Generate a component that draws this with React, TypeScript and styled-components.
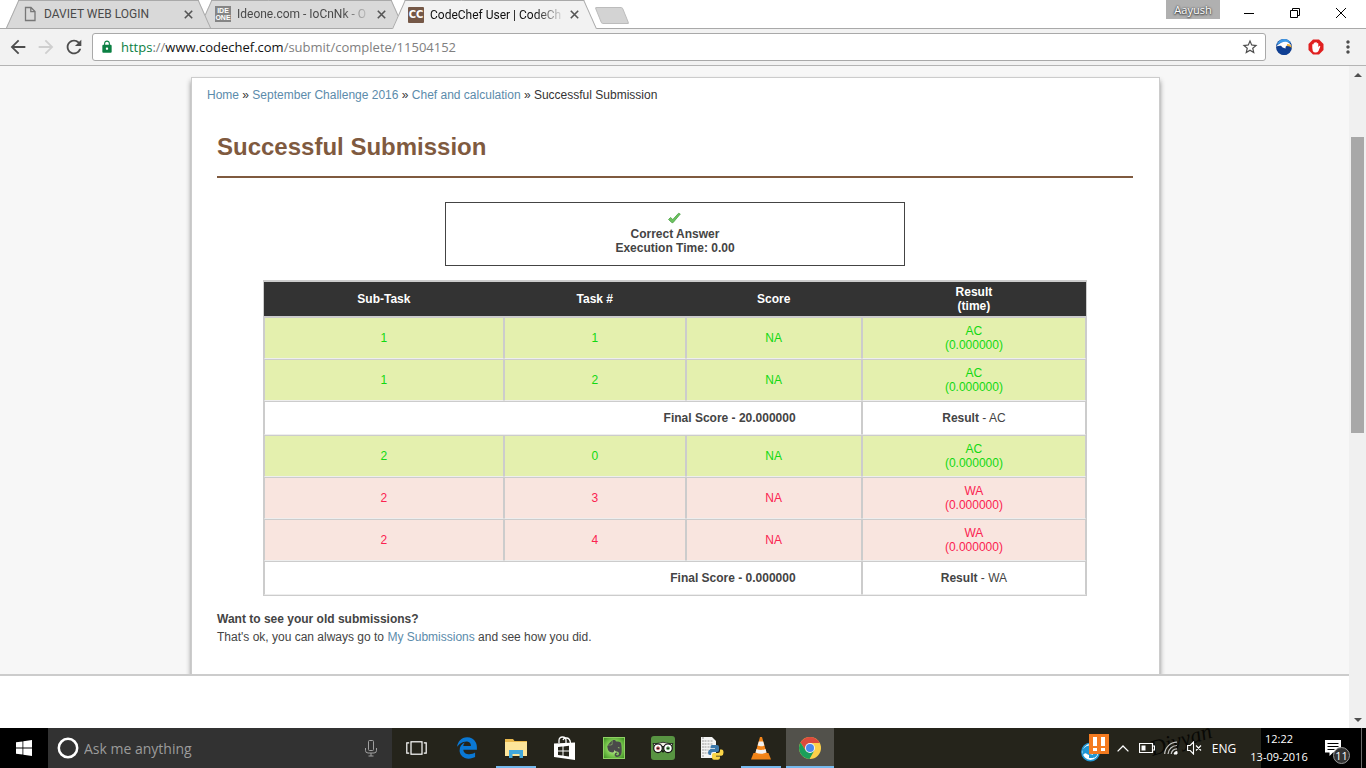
import React from "react";
import styled, { createGlobalStyle, css } from "styled-components";
import {
  MdArrowBack,
  MdArrowForward,
  MdLock,
  MdMoreVert,
  MdRefresh,
  MdStarBorder,
} from "react-icons/md";
import { FaEdgeLegacy } from "react-icons/fa";
import { SiEvernote } from "react-icons/si";

const GlobalStyle = createGlobalStyle`
  *, *::before, *::after { box-sizing: border-box; }
  body { margin: 0; background: #fff; }
  button { padding: 0; border: 0; background: none; color: inherit; font: inherit; }
`;

const uiFont = '"Open Sans", "Noto Sans", sans-serif';
const tabFont = 'Roboto, "Open Sans", sans-serif';
const siteFont = '"Liberation Sans", Arial, sans-serif';

/* ---------- window ---------- */

const Window = styled.div`
  display: flex;
  flex-direction: column;
  min-height: 100vh;
  font-family: ${uiFont};
`;

const TabStrip = styled.header`
  position: relative;
  display: flex;
  align-items: flex-start;
  height: 29px;
  padding: 0 2px 0 6px;
  background: #fff;
  box-shadow: inset 0 -1px 0 #a9a9a9;
`;

const TabList = styled.div`
  display: flex;
`;

const Tab = styled.div<{ $active?: boolean; $level: number }>`
  position: relative;
  z-index: ${(p) => p.$level};
  display: flex;
  align-items: center;
  width: 205px;
  height: ${(p) => (p.$active ? 29 : 28)}px;
  margin-right: -12px;
  padding: 0 15px 0 16px;
  color: ${(p) => (p.$active ? "#111" : "#4a4a4a")};
  font-family: ${tabFont};
  font-size: 12px;

  &::before,
  &::after {
    content: "";
    position: absolute;
    z-index: -1;
    top: 0;
    bottom: 0;
    width: 60%;
    background: ${(p) => (p.$active ? "#f2f2f2" : "#d9d9d9")};
    border-top: 1px solid #a9a9a9;
  }
  &::before {
    left: 0;
    border-left: 1px solid #a9a9a9;
    transform: skewX(-24deg);
    transform-origin: bottom left;
  }
  &::after {
    right: 0;
    border-right: 1px solid #a9a9a9;
    transform: skewX(24deg);
    transform-origin: bottom right;
  }
`;

const TabTitle = styled.button<{ $fade?: boolean }>`
  flex: 1;
  min-width: 0;
  margin: 0 2px 0 6px;
  overflow: hidden;
  white-space: nowrap;
  text-align: left;
  line-height: 18px;
  ${(p) => p.$fade && "mask-image: linear-gradient(to right, #000 78%, transparent);"}
`;

const TabClose = styled.button`
  display: flex;
  padding: 3px;
  color: #555;
`;

const Favicon = styled.span<{ $bg?: string }>`
  display: flex;
  flex-direction: column;
  align-items: center;
  justify-content: center;
  width: 16px;
  height: 16px;
  background: ${(p) => p.$bg || "transparent"};
  color: #fff;
  font: bold 7px/7px "Liberation Sans", sans-serif;
`;

const FaviconCC = styled(Favicon)`
  border-radius: 1px;
  font: bold 10px/16px "DejaVu Sans", sans-serif;
`;

const NewTab = styled.button`
  width: 28px;
  height: 17px;
  margin: 7px 0 0 13px;
  background: #d3d3d3;
  border: 1px solid #bcbcbc;
  border-radius: 2px;
  transform: skewX(22deg);
`;

const WindowControls = styled.div`
  display: flex;
  align-items: flex-start;
  margin-left: auto;
  color: #000;
`;

const Profile = styled.button`
  width: 54px;
  height: 19px;
  background: #b0b0b0;
  color: #fff;
  font-size: 11px;
  line-height: 18px;
  text-shadow: 0 0 2px #333, 0 1px 2px #333;
`;

const WindowButton = styled.button`
  display: flex;
  align-items: center;
  justify-content: center;
  width: 46px;
  height: 26px;

  ${Profile} + & {
    margin-left: 6px;
  }
`;

/* ---------- toolbar ---------- */

const Toolbar = styled.nav`
  display: flex;
  align-items: center;
  height: 37px;
  padding: 0 2px 0 4px;
  background: #f2f2f2;
  border-bottom: 1px solid #b4b4b4;
`;

const ToolButton = styled.button<{ $off?: boolean; $w?: number }>`
  display: flex;
  align-items: center;
  justify-content: center;
  width: ${(p) => p.$w || 28}px;
  height: 28px;
  color: ${(p) => (p.$off ? "#cfcfcf" : "#4d4d4d")};
`;

const AddressBar = styled.div`
  display: flex;
  flex: 1;
  align-items: center;
  height: 28px;
  margin: 0 2px 0 4px;
  padding: 0 1px 0 7px;
  background: #fff;
  border: 1px solid #a9a9a9;
  border-radius: 3px;
  color: #0b8043;
`;

const Address = styled.div`
  flex: 1;
  margin-left: 7px;
  color: #808080;
  font-size: 13px;
  line-height: 20px;
  white-space: nowrap;
  outline: none;
`;

const Secure = styled.span`
  color: #0b8043;
`;
const Host = styled.span`
  color: #111;
`;

/* ---------- page ---------- */

const Viewport = styled.div`
  display: flex;
  flex: 1;
`;

const Site = styled.div`
  display: flex;
  flex: 1;
  flex-direction: column;
  min-width: 0;
  background: #fff;
  color: #444;
  font: 12px/14px ${siteFont};
`;

const Backdrop = styled.div`
  padding: 11px 0 0 2px;
  overflow: hidden;
  background: #f7f7f7;
  border-bottom: 2px solid #ccc;
`;

const Card = styled.main`
  max-width: 969px;
  margin: 0 auto;
  padding: 10px 26px 28px 25px;
  background: #fff;
  border: 1px solid #ccc;
  border-bottom: 0;
  box-shadow: 0 4px 5px #888;
`;

const Link = styled.a`
  color: #5b8bab;
  text-decoration: none;
`;

const Breadcrumbs = styled.nav`
  margin-left: -10px;
  color: #333;
`;

const Title = styled.h1`
  margin: 30px 0 24px;
  padding-bottom: 14px;
  border-bottom: 2px solid #7f5a3f;
  color: #7f5a3f;
  font-size: 24px;
  line-height: 30px;
`;

const Verdict = styled.section`
  max-width: 460px;
  margin: 0 auto 14px;
  padding: 7px 0 10px;
  border: 1px solid #444;
  font-weight: bold;
  text-align: center;

  svg {
    display: block;
    margin: 0 auto 1px;
  }
  p {
    margin: 0;
  }
`;

const Results = styled.table`
  width: 90%;
  margin: 0 auto;
  border: 1px solid #ccc;
  border-spacing: 0;
  table-layout: fixed;
  text-align: center;
`;

const HeadCell = styled.th<{ $width: string }>`
  width: ${(p) => p.$width};
  padding: 3px 0;
  background: #333;
  border: 1px solid #ccc;
  border-width: 1px 0;
  color: #fff;
`;

const tones = {
  ok: css`
    background: #e4f0ae;
    color: #12d912;
  `,
  bad: css`
    background: #f9e5df;
    color: #fb2350;
  `,
};

const Cell = styled.td<{ $tone: "ok" | "bad" }>`
  padding: 6px 0;
  border: 1px solid #ccc;
  border-bottom-color: #eee;
  ${(p) => tones[p.$tone]}
`;

const SummaryCell = styled.td<{ $end?: boolean }>`
  padding: 9px 0;
  border: 1px solid #ccc;
  border-bottom-color: #eee;
  ${(p) =>
    p.$end &&
    css`
      padding-right: 65px;
      text-align: right;
    `}
`;

const Help = styled.p`
  margin: 14px 0 0;
  line-height: 18px;
`;

/* ---------- scrollbar ---------- */

const Scrollbar = styled.div`
  display: flex;
  flex-direction: column;
  width: 17px;
  background: #f0f0f0;
`;

const ScrollArrow = styled.button`
  display: flex;
  align-items: center;
  justify-content: center;
  height: 17px;
`;

const Track = styled.div`
  display: flex;
  flex: 1;
  flex-direction: column;
  align-items: center;

  &::before {
    content: "";
    flex: 54;
  }
  &::after {
    content: "";
    flex: 278;
  }
`;

const Thumb = styled.div`
  flex: 296;
  width: 13px;
  background: #a8a8a8;
`;

/* ---------- taskbar ---------- */

const Taskbar = styled.footer`
  display: flex;
  height: 40px;
  background: #25241b;
  color: #fff;
`;

const StartButton = styled.button`
  display: flex;
  align-items: center;
  justify-content: center;
  width: 48px;
  background: #000;
`;

const SearchBox = styled.label`
  display: flex;
  align-items: center;
  width: 344px;
  padding: 0 15px 0 8px;
  background: #323232;
`;

const SearchInput = styled.input`
  flex: 1;
  min-width: 0;
  margin-left: 4px;
  padding: 1px 0 0;
  border: 0;
  outline: 0;
  background: none;
  color: #fff;
  font: 14px/20px ${uiFont};

  &::placeholder {
    color: #9b9b9b;
  }
`;

const Apps = styled.div`
  display: flex;
  gap: 1px;
  margin-left: 3px;
`;

const AppButton = styled.button<{ $state?: "open" | "active" }>`
  display: flex;
  align-items: center;
  justify-content: center;
  width: 48px;
  ${(p) =>
    p.$state === "open" &&
    css`
      background: linear-gradient(#76b9ed, #76b9ed) center bottom / 40px 2px no-repeat;
    `}
  ${(p) =>
    p.$state === "active" &&
    css`
      background: linear-gradient(#76b9ed, #76b9ed) center bottom / 100% 2px no-repeat #52514b;
    `}
`;

const Tray = styled.div`
  position: relative;
  display: flex;
  align-items: center;
  margin-left: auto;
`;

const TrayButton = styled.button<{ $w: number }>`
  position: relative;
  display: flex;
  align-items: center;
  justify-content: center;
  width: ${(p) => p.$w}px;
  height: 40px;
  font-size: 12px;
`;

const Signature = styled.span`
  position: absolute;
  left: 70px;
  top: 1px;
  color: #080805;
  font: italic 22px/22px "Liberation Serif", serif;
  transform: rotate(-17deg);
`;

const Dark = styled.div`
  display: flex;
  height: 40px;
  margin-left: 6px;
  background: linear-gradient(to right, transparent 12px, #000 12px);
`;

const Clock = styled.time`
  width: 60px;
  padding-top: 2px;
  font-size: 11px;
  line-height: 18px;
  text-align: center;
  white-space: nowrap;
`;

const Notifications = styled(TrayButton)`
  margin-right: 4px;
`;

const Badge = styled.span`
  position: absolute;
  left: 24px;
  top: 19px;
  width: 17px;
  height: 17px;
  border: 1px solid #999;
  border-radius: 50%;
  background: #333;
  font-size: 11px;
  line-height: 15px;
`;

const ShowDesktop = styled.button`
  width: 5px;
  height: 40px;
  border-left: 1px solid #6a6a6a;
`;

/* ---------- drawings ---------- */

const CloseMark = () => (
  <svg width="9" height="9" viewBox="0 0 9 9" stroke="currentColor" strokeWidth="1.6">
    <path d="M.8.8l7.4 7.4M8.2.8L.8 8.2" />
  </svg>
);

const PageIcon = () => (
  <svg width="16" height="16" viewBox="0 0 16 16" fill="none" stroke="#777" strokeWidth="1.3">
    <path d="M3.5 1.5h5.5l4 4v9h-9.500z M8.800 1.500v4.200h4.200" />
  </svg>
);

const Tick = () => (
  <svg width="16" height="16" viewBox="0 0 16 16">
    <path d="M1.500 9.500l2-2 2.300 2L11.500 3.300l1.800.7L6 12.700 4.800 12.600z" fill="#6cc35f" stroke="#4c9f48" strokeWidth=".8" />
  </svg>
);

const BirdIcon = () => (
  <svg width="16" height="16" viewBox="0 0 16 16">
    <circle cx="8" cy="8" r="8" fill="#123f8e" />
    <path d="M.5 6Q3 0 8 0t7 4Q7 1 .5 6z" fill="#3f9be8" />
    <path d="M0 7.500Q5 2.500 10 2.800 14 3.500 15.500 7 13 5.800 11 6.500 9 7.500 9.500 9.500 6 9 5 6.800 3 6.500 0 7.500z" fill="#fff" />
    <path d="M11 5q4-.5 5 4-2-2-5-2z" fill="#f6b63c" />
    <path d="M1 9.500q5-2 8 1t6-.5q-2 6-7 6t-7-6.500z" fill="#0f3f94" />
  </svg>
);

const HandIcon = () => (
  <svg width="16" height="16" viewBox="0 0 16 16">
    <path d="M5 .5h6L15.500 5v6L11 15.500H5L.5 11V5z" fill="#e02020" />
    <path d="M4.300 9V5.500q.7-1 1.400 0V4q.8-1 1.500 0v-.5q.8-1.200 1.600 0V4.500q.8-1 1.500 0V8l1.300-1.300q.9.100.6 1L10.500 12q-1 1.500-3 1.500T4.800 12z" fill="#fff" />
  </svg>
);

const ArrowGlyph = ({ down }: { down?: boolean }) => (
  <svg width="8" height="4" viewBox="0 0 8 4" fill="#505050">
    <path d={down ? "M0 0h8L4 4z" : "M0 4h8L4 0z"} />
  </svg>
);

const WindowsLogo = () => (
  <svg width="16" height="16" viewBox="0 0 16 16" fill="#fff">
    <path d="M0 2.300L6.500 1.400v6.100H0zM7.300 1.200L16 0v7.500H7.300zM0 8.400h6.500v6.200L0 13.700zM7.300 8.400H16V16l-8.700-1.200z" />
  </svg>
);

const MicIcon = () => (
  <svg width="12" height="17" viewBox="0 0 12 17" fill="none" stroke="#a0a0a0">
    <rect x="3.500" y=".5" width="5" height="10" rx="1" />
    <path d="M.5 8v2.500q0 2.500 2.500 2.500h6q2.500 0 2.500-2.500V8M6 13v3M3.500 16h5" />
  </svg>
);

const TaskViewIcon = () => (
  <svg width="21" height="14" viewBox="0 0 21 14" fill="none" stroke="#fff" strokeWidth="1.200">
    <rect x="5" y=".8" width="11" height="12.400" />
    <path d="M3.200 1.800H.8v10.400h2.400M17.800 1.800h2.400v10.400h-2.400" />
  </svg>
);

const FolderIcon = () => (
  <svg width="22" height="20" viewBox="0 0 22 20">
    <path d="M0 1h8l1.500 2H22v15H0z" fill="#eab94d" />
    <path d="M0 4h22v14H0z" fill="#fde59a" />
    <path d="M4 12h14v8h-3.500v-4h-7v4H4z" fill="#41a8dc" />
  </svg>
);

const StoreIcon = () => (
  <svg width="22" height="24" viewBox="0 0 22 24">
    <path d="M5 7V4.500Q5 1 8.500 1T12 4.500V7M9 4q1-2.500 4-2t3.500 5" fill="none" stroke="#fff" strokeWidth="1.300" />
    <path d="M0 7.500l21-1V24L0 21z" fill="#fff" />
    <path d="M4 11l4.500-.5v4H4zM9.500 10.400l5.500-.7v4.800H9.500zM4 15.500h4.500v4L4 19zM9.500 15.500H15v5l-5.500-.8z" fill="#25241b" />
  </svg>
);

const EvernoteTile = styled.span`
  display: flex;
  align-items: center;
  justify-content: center;
  width: 22px;
  height: 22px;
  background: radial-gradient(#d4f0b0, #7cc850 55%, #3c8f22);
  border: 1px solid #8fd163;
  color: #4a4a4a;
`;

const OwlIcon = () => (
  <svg width="24" height="24" viewBox="0 0 24 24">
    <rect width="24" height="24" rx="3" fill="#589442" />
    <path d="M2 7.500h4q6-2.500 12 0h4l-1.500 3h-17z" fill="#f4f4e8" stroke="#111" strokeWidth=".8" />
    <circle cx="7" cy="12.300" r="4.300" fill="#fff" stroke="#111" strokeWidth="1.200" />
    <circle cx="17" cy="12.300" r="4.300" fill="#fff" stroke="#111" strokeWidth="1.200" />
    <circle cx="7" cy="12.300" r="1.500" fill="#222" stroke="#d66" strokeWidth="1" />
    <circle cx="17" cy="12.300" r="1.500" fill="#222" stroke="#6b6" strokeWidth="1" />
    <path d="M10.500 14.500h3L12 17z" fill="#111" />
  </svg>
);

const PythonIcon = () => (
  <svg width="24" height="24" viewBox="0 0 24 24">
    <path d="M1 1h11l4 4v17H1z" fill="#f4f4f4" />
    <path d="M3 1v21M4.500 5h9M4.500 8h9M4.500 11h6M4.500 14h4M4.500 17h4" stroke="#999" strokeWidth="1" strokeDasharray="2 1" />
    <path d="M12 9h5q2 0 2 2v3q0 2-2 2h-4q-2 0-2 2v1h-1q-2 0-2-2.500T10.500 13H15v-.8h-4.500V11q0-2 1.500-2z" fill="#3b78ab" />
    <path d="M18 23.800h-4q-2 0-2-2V19q0-2 2-2h4q2 0 2-2v-1.500h1.500q2 0 2 3t-2 3.300H16v.8h4v1.200q0 2-2 2z" fill="#fbd648" />
  </svg>
);

const ConeIcon = () => (
  <svg width="20" height="23" viewBox="0 0 20 23">
    <path d="M2.500 16h15L20 22.500H0z" fill="#f08317" />
    <path d="M9 0h2l5 17.500q-6 3-12 0z" fill="#f5861a" />
    <path d="M7.800 4.500h4.400l1.200 4q-3.400 1.500-6.800 0zM5.500 12q4.500 2 9 0l1 3.500q-5.500 2.500-11 0z" fill="#f1f1f1" />
  </svg>
);

const ChromeIcon = () => (
  <svg width="22" height="22" viewBox="0 0 22 22">
    <circle cx="11" cy="11" r="11" fill="#fcd04b" />
    <path d="M1.500 5.500A11 11 0 0120.500 5.500L20.500 6H11L6.700 13.500z" fill="#dc4a3d" />
    <path d="M1.500 5.500A11 11 0 0010.500 22l4.800-8.500-8.600 0z" fill="#1a9f5a" />
    <circle cx="11" cy="11" r="5" fill="#f4f4f4" />
    <circle cx="11" cy="11" r="4" fill="#4a87ee" />
  </svg>
);

const AlertIcon = () => (
  <svg width="28" height="28" viewBox="0 0 28 28">
    <circle cx="9.500" cy="18" r="8.700" fill="#fff" stroke="#2196d3" strokeWidth="1.500" />
    <path d="M2 15q4-5 8-3l6 4q2 5-3 8-2-1-1-4-4 2-6 0t-4 1z" fill="#2196d3" />
    <path d="M8 21h4v3H8z" fill="#2196d3" />
    <rect x="8" y="0" width="20" height="20" fill="#f47b20" />
    <path d="M12 3h4v9h-4zM12 14h4v3h-4zM20 3h4v9h-4zM20 14h4v3h-4z" fill="#fff" />
  </svg>
);

const ChevronIcon = () => (
  <svg width="12" height="7" viewBox="0 0 12 7" fill="none" stroke="#fff" strokeWidth="1.300">
    <path d="M.6 6.400L6 1l5.400 5.400" />
  </svg>
);

const BatteryIcon = () => (
  <svg width="16" height="10" viewBox="0 0 16 10">
    <path d="M.5.5h13v9H.5zM14 3h1.500v4H14" fill="none" stroke="#fff" strokeWidth="1.200" />
    <path d="M2.500 2.500h4v5h-4z" fill="#fff" />
  </svg>
);

const WifiIcon = () => (
  <svg width="14" height="14" viewBox="0 0 14 14" fill="none" stroke="#fff">
    <path d="M.7 13A12.300 12.300 0 0113 1.200M4 13A9 9 0 0113 4.500M7.200 13A6 6 0 0113 7.800" strokeWidth="1.200" opacity=".75" />
    <path d="M10 13a3 3 0 013-2.500V13z" fill="#fff" />
  </svg>
);

const MutedIcon = () => (
  <svg width="15" height="14" viewBox="0 0 15 14" fill="none" stroke="#fff" strokeWidth="1.100">
    <path d="M.6 4.500h2.600L6.500 1v12L3.200 9.500H.6zM9 4.500l5 5M14 4.500l-5 5" />
  </svg>
);

const NoteIcon = () => (
  <svg width="16" height="16" viewBox="0 0 16 16">
    <path d="M0 0h16v12.500H8L4.500 16v-3.500H0z" fill="#fff" />
    <path d="M2.500 3.500h11M2.500 6.500h11M2.500 9.500h7" stroke="#000" />
  </svg>
);

/* ---------- data ---------- */

type Row =
  | { kind: "run"; sub: number; task: number; result: "AC" | "WA" }
  | { kind: "total"; score: string; result: "AC" | "WA" };

const rows: Row[] = [
  { kind: "run", sub: 1, task: 1, result: "AC" },
  { kind: "run", sub: 1, task: 2, result: "AC" },
  { kind: "total", score: "20.000000", result: "AC" },
  { kind: "run", sub: 2, task: 0, result: "AC" },
  { kind: "run", sub: 2, task: 3, result: "WA" },
  { kind: "run", sub: 2, task: 4, result: "WA" },
  { kind: "total", score: "0.000000", result: "WA" },
];

const ResultRow = ({ row }: { row: Row }) => {
  if (row.kind === "total") {
    return (
      <tr>
        <SummaryCell colSpan={3} $end>
          <b>Final Score - {row.score}</b>
        </SummaryCell>
        <SummaryCell>
          <b>Result</b> - {row.result}
        </SummaryCell>
      </tr>
    );
  }
  const tone = row.result === "AC" ? "ok" : "bad";
  return (
    <tr>
      <Cell $tone={tone}>{row.sub}</Cell>
      <Cell $tone={tone}>{row.task}</Cell>
      <Cell $tone={tone}>NA</Cell>
      <Cell $tone={tone}>
        {row.result}
        <br />
        (0.000000)
      </Cell>
    </tr>
  );
};

export default function App() {
  return (
    <>
      <GlobalStyle />
      <Window>
        <TabStrip>
          <TabList>
            <Tab $level={2}>
              <PageIcon />
              <TabTitle>DAVIET WEB LOGIN</TabTitle>
              <TabClose aria-label="Close tab"><CloseMark /></TabClose>
            </Tab>
            <Tab $level={1}>
              <Favicon $bg="#858585">
                <span>IDE</span>
                <span>ONE</span>
              </Favicon>
              <TabTitle $fade>Ideone.com - IoCnNk - O</TabTitle>
              <TabClose aria-label="Close tab"><CloseMark /></TabClose>
            </Tab>
            <Tab $active $level={3}>
              <FaviconCC $bg="#755847">CC</FaviconCC>
              <TabTitle $fade>CodeChef User | CodeCh</TabTitle>
              <TabClose aria-label="Close tab"><CloseMark /></TabClose>
            </Tab>
          </TabList>
          <NewTab aria-label="New tab" />
          <WindowControls>
            <Profile>Aayush</Profile>
            <WindowButton aria-label="Minimize">
              <svg width="10" height="10" stroke="#000"><path d="M0 5.500h10" /></svg>
            </WindowButton>
            <WindowButton aria-label="Restore">
              <svg width="10" height="10" fill="none" stroke="#000"><path d="M.5 2.500h7v7h-7zM2.500 2V.5h7v7H8" /></svg>
            </WindowButton>
            <WindowButton aria-label="Close window">
              <svg width="10" height="10" stroke="#000"><path d="M0 0l10 10M10 0L0 10" /></svg>
            </WindowButton>
          </WindowControls>
        </TabStrip>

        <Toolbar>
          <ToolButton aria-label="Back"><MdArrowBack size={22} /></ToolButton>
          <ToolButton $off aria-label="Forward"><MdArrowForward size={22} /></ToolButton>
          <ToolButton aria-label="Reload"><MdRefresh size={22} /></ToolButton>
          <AddressBar>
            <MdLock size={14} />
            <Address role="textbox" aria-label="Address" contentEditable suppressContentEditableWarning spellCheck={false}>
              <Secure>https</Secure>://<Host>www.codechef.com</Host>/submit/complete/11504152
            </Address>
            <ToolButton aria-label="Bookmark"><MdStarBorder size={18} /></ToolButton>
          </AddressBar>
          <ToolButton $w={32} aria-label="Search extension"><BirdIcon /></ToolButton>
          <ToolButton $w={32} aria-label="Ad blocker"><HandIcon /></ToolButton>
          <ToolButton $w={32} aria-label="Menu"><MdMoreVert size={20} /></ToolButton>
        </Toolbar>

        <Viewport>
          <Site>
            <Backdrop>
              <Card>
                <Breadcrumbs>
                  <Link href="#home">Home</Link> » <Link href="#contest">September Challenge 2016</Link> »{" "}
                  <Link href="#problem">Chef and calculation</Link> » Successful Submission
                </Breadcrumbs>
                <Title>Successful Submission</Title>
                <Verdict>
                  <Tick />
                  <p>Correct Answer</p>
                  <p>Execution Time: 0.00</p>
                </Verdict>
                <Results>
                  <thead>
                    <tr>
                      <HeadCell $width="29.2%">Sub-Task</HeadCell>
                      <HeadCell $width="22.1%">Task #</HeadCell>
                      <HeadCell $width="21.4%">Score</HeadCell>
                      <HeadCell $width="27.3%">
                        Result
                        <br />
                        (time)
                      </HeadCell>
                    </tr>
                  </thead>
                  <tbody>
                    {rows.map((row, i) => (
                      <ResultRow key={i} row={row} />
                    ))}
                  </tbody>
                </Results>
                <Help>
                  <b>Want to see your old submissions?</b>
                  <br />
                  That's ok, you can always go to <Link href="#submissions">My Submissions</Link> and see how you did.
                </Help>
              </Card>
            </Backdrop>
          </Site>
          <Scrollbar>
            <ScrollArrow aria-label="Scroll up"><ArrowGlyph /></ScrollArrow>
            <Track><Thumb /></Track>
            <ScrollArrow aria-label="Scroll down"><ArrowGlyph down /></ScrollArrow>
          </Scrollbar>
        </Viewport>

        <Taskbar>
          <StartButton aria-label="Start"><WindowsLogo /></StartButton>
          <SearchBox>
            <svg width="24" height="24" fill="none" stroke="#fff" strokeWidth="2.500"><circle cx="12" cy="12" r="9.200" /></svg>
            <SearchInput aria-label="Search" placeholder="Ask me anything" />
            <MicIcon />
          </SearchBox>
          <AppButton aria-label="Task view"><TaskViewIcon /></AppButton>
          <Apps>
            <AppButton aria-label="Edge"><FaEdgeLegacy size={22} color="#0a78d4" /></AppButton>
            <AppButton $state="open" aria-label="File Explorer"><FolderIcon /></AppButton>
            <AppButton aria-label="Store"><StoreIcon /></AppButton>
            <AppButton aria-label="Evernote"><EvernoteTile><SiEvernote size={17} /></EvernoteTile></AppButton>
            <AppButton aria-label="TripAdvisor"><OwlIcon /></AppButton>
            <AppButton aria-label="Python"><PythonIcon /></AppButton>
            <AppButton $state="open" aria-label="VLC"><ConeIcon /></AppButton>
            <AppButton $state="active" aria-label="Chrome"><ChromeIcon /></AppButton>
          </Apps>
          <Tray>
            <Signature aria-hidden="true">Divyan</Signature>
            <TrayButton $w={32} aria-label="Alerts"><AlertIcon /></TrayButton>
            <TrayButton $w={24} aria-label="Show hidden icons"><ChevronIcon /></TrayButton>
            <TrayButton $w={24} aria-label="Battery"><BatteryIcon /></TrayButton>
            <TrayButton $w={24} aria-label="Network"><WifiIcon /></TrayButton>
            <TrayButton $w={22} aria-label="Volume"><MutedIcon /></TrayButton>
            <TrayButton $w={38}>ENG</TrayButton>
            <Dark>
              <Clock>
                12:22
                <br />
                13-09-2016
              </Clock>
              <Notifications $w={48} aria-label="Notifications">
                <NoteIcon />
                <Badge>11</Badge>
              </Notifications>
              <ShowDesktop aria-label="Show desktop" />
            </Dark>
          </Tray>
        </Taskbar>
      </Window>
    </>
  );
}
